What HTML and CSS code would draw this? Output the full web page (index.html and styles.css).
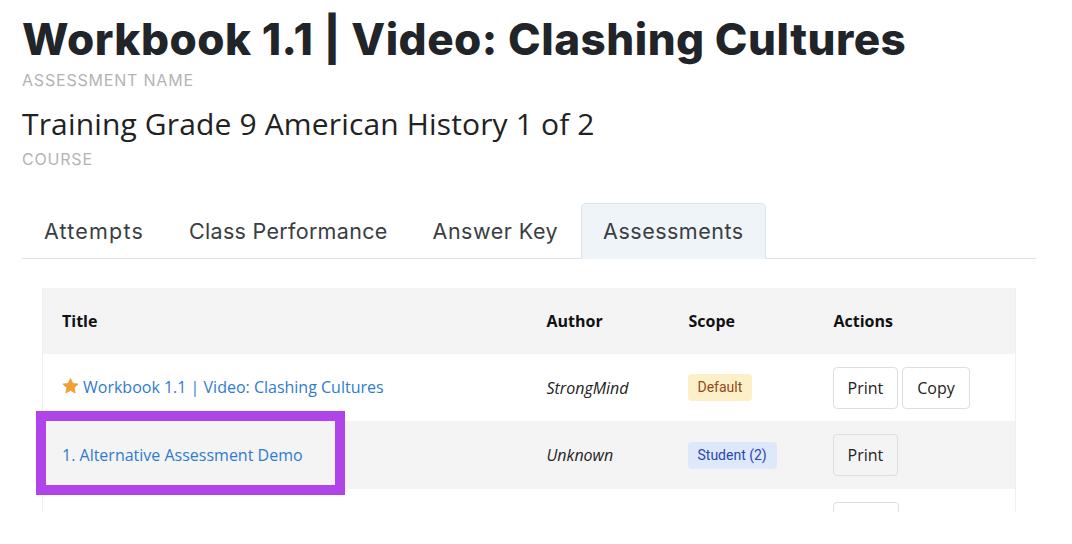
FILE: index.html
```html
<!DOCTYPE html>
<html>
<head>
<meta charset="utf-8">
<link rel="stylesheet" href="styles.css">
</head>
<body>
<div class="page">
  <h1 class="title">Workbook 1.1 | Video: Clashing Cultures</h1>
  <div class="label">ASSESSMENT NAME</div>
  <div class="course">Training Grade 9 American History 1 of 2</div>
  <div class="label">COURSE</div>

  <ul class="tabs">
    <li class="tab tab-attempts">Attempts</li>
    <li class="tab tab-class">Class Performance</li>
    <li class="tab">Answer Key</li>
    <li class="tab active">Assessments</li>
  </ul>

  <div class="table-wrap">
    <table class="grid">
      <thead>
        <tr>
          <th class="c-title">Title</th>
          <th class="c-author">Author</th>
          <th class="c-scope">Scope</th>
          <th class="c-actions">Actions</th>
        </tr>
      </thead>
      <tbody>
        <tr>
          <td class="c-title"><span class="star"><svg width="17" height="16" viewBox="0 0 24 23"><path d="M12 0.8l3.3 7 7.6 0.9-5.6 5.2 1.5 7.6L12 17.7l-6.8 3.8 1.5-7.6L1.1 8.7l7.6-0.9z" fill="#f0a035" stroke="#f0a035" stroke-width="1.2" stroke-linejoin="round"/></svg></span><a class="link">Workbook 1.1 | Video: Clashing Cultures</a></td>
          <td class="c-author"><em>StrongMind</em></td>
          <td class="c-scope"><span class="badge default">Default</span></td>
          <td class="c-actions"><span class="btn">Print</span><span class="btn">Copy</span></td>
        </tr>
        <tr class="alt">
          <td class="c-title"><span class="hl"><a class="link">1. Alternative Assessment Demo</a></span></td>
          <td class="c-author"><em>Unknown</em></td>
          <td class="c-scope"><span class="badge student">Student (2)</span></td>
          <td class="c-actions"><span class="btn">Print</span></td>
        </tr>
        <tr>
          <td class="c-title"></td>
          <td class="c-author"></td>
          <td class="c-scope"></td>
          <td class="c-actions"><span class="btn btn-empty"></span></td>
        </tr>
      </tbody>
    </table>
  </div>
</div>
</body>
</html>
```

FILE: styles.css
```css
* { box-sizing: border-box; }
html, body { margin: 0; padding: 0; background: #fff; }
body { font-family: "Open Sans", "Liberation Sans", sans-serif; color: #222; }

.page { padding: 13px 36px 0 22px; }

.title {
  margin: 0;
  font-family: Inter, "DejaVu Sans", sans-serif;
  font-weight: 800;
  font-size: 44px;
  line-height: 52px;
  color: #212529;
  letter-spacing: 0.5px;
}

.label {
  font-family: Inter, "DejaVu Sans", sans-serif;
  font-size: 16px;
  line-height: 22px;
  color: #b3b3b6;
  letter-spacing: 0.8px;
  margin-top: 4px;
}

.course {
  font-family: "Open Sans", sans-serif;
  font-size: 30px;
  line-height: 40px;
  color: #222;
  margin-top: 13px;
  letter-spacing: 0.15px;
}

.tabs {
  list-style: none;
  margin: 33px 0 0 0;
  padding: 0;
  display: flex;
  gap: 1px;
  border-bottom: 1px solid #dfe2e8;
  width: 1014px;
}
.tab {
  font-family: Inter, "DejaVu Sans", sans-serif;
  font-size: 21.5px;
  color: #3b3d42;
  padding: 0 21px;
  height: 55px;
  line-height: 55px;
  border: 1px solid transparent;
  border-bottom: none;
  border-radius: 5px 5px 0 0;
  margin-bottom: -1px;
  letter-spacing: 0.5px;
}
.tab.tab-attempts { letter-spacing: 1.2px; }
.tab.tab-class { letter-spacing: 0.3px; }
.tab.active {
  background: #eff4f9;
  border-color: #dde3ea;
  height: 56px;
}

.table-wrap {
  margin: 29px 0 0 20px;
  width: 974px;
  height: 224px;
  clip-path: inset(-30px -30px 0 -30px);
}
.grid {
  width: 974px;
  border-collapse: collapse;
  border-left: 1px solid #efefef;
  border-right: 1px solid #efefef;
  font-size: 16px;
}
.grid th {
  background: #f4f4f4;
  text-align: left;
  font-weight: 700;
  color: #111;
  height: 66px;
  padding: 0 19px;
}
.grid td {
  height: 67px;
  padding: 0 19px;
  vertical-align: middle;
}
.grid tr.alt td { background: #f4f4f4; height: 68px; }
.c-title { width: 485px; }
.c-author { width: 142px; }
.c-scope { width: 145px; }
.grid td.c-actions { padding-left: 18px; }
.grid td.c-scope { padding-left: 18px; }

.link { color: #2f7bd1; text-decoration: none; }
.star { display: inline-block; vertical-align: -1px; margin-right: 4px; }
em { color: #222; }

.hl {
  position: relative;
}
.hl::before {
  content: "";
  position: absolute;
  left: -26px;
  top: -33px;
  width: 289px;
  height: 64px;
  border: 10px solid #b044e8;
}

.badge {
  display: inline-block;
  font-family: Roboto, sans-serif;
  font-size: 14px;
  line-height: 27px;
  padding: 0 10px;
  border-radius: 4px;
}
.badge.default { background: #fdf0c8; color: #8f4a1e; }
.badge.student { background: #dde9fb; color: #2a46b0; }

.btn {
  display: inline-block;
  height: 42px;
  line-height: 40px;
  padding: 0 14px;
  border: 1px solid #dedede;
  border-radius: 4px;
  color: #222;
  margin-right: 4px;
  background: transparent;
  vertical-align: middle;
}
.btn-empty { width: 66px; }
```
